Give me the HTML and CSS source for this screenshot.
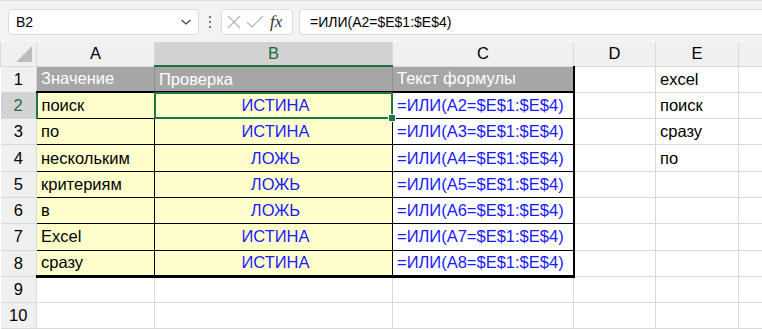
FILE: index.html
```html
<!DOCTYPE html>
<html lang="ru">
<head>
  <meta charset="UTF-8">
  <title>ИЛИ</title>
  <link rel="stylesheet" href="styles.css">
</head>
<body>
  <div class="formula-bar">
    <div class="name-box">
      <span>B2</span>
      <svg class="chevron" width="12" height="8" viewBox="0 0 12 8"><path d="M1.5 2 L6 6 L10.5 2" fill="none" stroke="#444" stroke-width="1.3"/></svg>
    </div>
    <div class="dots"><i></i><i></i><i></i></div>
    <div class="fx-box">
      <svg width="16" height="16" viewBox="0 0 16 16"><path d="M2 2 L14 14 M14 2 L2 14" stroke="#b5b5b5" stroke-width="1.2"/></svg>
      <svg width="18" height="16" viewBox="0 0 18 16"><path d="M1 8 L6 13 L17 2" fill="none" stroke="#b5b5b5" stroke-width="1.2"/></svg>
      <span class="fx">fx</span>
    </div>
    <div class="formula-input">=ИЛИ(A2=$E$1:$E$4)</div>
  </div>

  <table class="sheet">
    <colgroup>
      <col class="c-row"><col class="c-a"><col class="c-b"><col class="c-c"><col class="c-d"><col class="c-e"><col class="c-f">
    </colgroup>
    <thead>
      <tr>
        <th class="corner"><span class="tri"></span></th>
        <th>A</th><th class="sel-col">B</th><th>C</th><th>D</th><th>E</th><th></th>
      </tr>
    </thead>
    <tbody>
      <tr class="r1">
        <th>1</th>
        <td class="head">Значение</td><td class="head">Проверка</td><td class="head last">Текст формулы</td><td></td><td>excel</td><td></td>
      </tr>
      <tr>
        <th class="sel-row">2</th>
        <td class="val">поиск</td><td class="res active">ИСТИНА</td><td class="txt last">=ИЛИ(A2=$E$1:$E$4)</td><td></td><td>поиск</td><td></td>
      </tr>
      <tr>
        <th>3</th>
        <td class="val">по</td><td class="res">ИСТИНА</td><td class="txt last">=ИЛИ(A3=$E$1:$E$4)</td><td></td><td>сразу</td><td></td>
      </tr>
      <tr>
        <th>4</th>
        <td class="val">нескольким</td><td class="res">ЛОЖЬ</td><td class="txt last">=ИЛИ(A4=$E$1:$E$4)</td><td></td><td>по</td><td></td>
      </tr>
      <tr>
        <th>5</th>
        <td class="val">критериям</td><td class="res">ЛОЖЬ</td><td class="txt last">=ИЛИ(A5=$E$1:$E$4)</td><td></td><td></td><td></td>
      </tr>
      <tr>
        <th>6</th>
        <td class="val">в</td><td class="res">ЛОЖЬ</td><td class="txt last">=ИЛИ(A6=$E$1:$E$4)</td><td></td><td></td><td></td>
      </tr>
      <tr>
        <th>7</th>
        <td class="val">Excel</td><td class="res">ИСТИНА</td><td class="txt last">=ИЛИ(A7=$E$1:$E$4)</td><td></td><td></td><td></td>
      </tr>
      <tr class="r8">
        <th>8</th>
        <td class="val">сразу</td><td class="res">ИСТИНА</td><td class="txt last">=ИЛИ(A8=$E$1:$E$4)</td><td></td><td></td><td></td>
      </tr>
      <tr>
        <th>9</th>
        <td></td><td></td><td></td><td></td><td></td><td></td>
      </tr>
      <tr>
        <th>10</th>
        <td></td><td></td><td></td><td></td><td></td><td></td>
      </tr>
    </tbody>
  </table>
</body>
</html>
```

FILE: styles.css
```css
* {
  box-sizing: border-box;
}
body {
  margin: 0;
  background: #fff;
  font-family: "Liberation Sans", Arial, sans-serif;
  color: #000;
  overflow: hidden;
}
.formula-bar {
  display: flex;
  align-items: center;
  height: 42px;
  padding: 0 0 0 8px;
  background: #f3f3f3;
  border-top: 1px solid #e1e1e1;
}
.name-box, .fx-box, .formula-input {
  height: 26px;
  background: #fff;
  border: 1px solid #dcdcdc;
  border-radius: 4px;
  display: flex;
  align-items: center;
}
.name-box {
  width: 191px;
  padding: 0 6px 0 7px;
  justify-content: space-between;
  font-size: 14px;
}
.dots {
  width: 22px;
  display: flex;
  flex-direction: column;
  align-items: center;
  gap: 3px;
}
.dots i {
  width: 2px;
  height: 2px;
  background: #777;
}
.fx-box {
  width: 72px;
  padding: 0 5px 0 4px;
  gap: 4px;
}
.fx {
  font-family: "Liberation Serif", serif;
  font-style: italic;
  font-size: 17px;
  color: #333;
  margin-left: 2px;
}
.formula-input {
  flex: 1;
  margin-left: 6px;
  padding-left: 10px;
  border-right: none;
  border-radius: 4px 0 0 4px;
  font-size: 14px;
}
.sheet {
  border-collapse: collapse;
  table-layout: fixed;
  width: 762px;
  font-size: 16.5px;
}
.c-row { width: 36px; }
.c-a { width: 118px; }
.c-b { width: 238px; }
.c-c { width: 181px; }
.c-d { width: 82px; }
.c-e { width: 83px; }
.c-f { width: 24px; }
.sheet th, .sheet td {
  height: 26.3px;
  padding: 0 0 0 4px;
  border: 1px solid #d9d9d9;
  white-space: nowrap;
  overflow: visible;
  font-weight: normal;
  text-align: left;
}
.sheet thead th {
  height: 24px;
  background: #f0f0f0;
  text-align: center;
  padding: 0;
  border-color: #d9d9d9;
  border-top: none;
}
.sheet thead th.sel-col {
  background: #d2d2d2;
  color: #1e6b3c;
  border-bottom: 2px solid #217346;
}
.corner {
  position: relative;
}
.tri {
  position: absolute;
  right: 4px;
  bottom: 4px;
  width: 0;
  height: 0;
  border-left: 16px solid transparent;
  border-bottom: 16px solid #bdbdbd;
}
.sheet tbody th {
  background: #f0f0f0;
  text-align: center;
  padding: 0;
  border-left: none;
}
.sheet tbody th.sel-row {
  background: #d2d2d2;
  color: #1e6b3c;
  border-right: 2px solid #217346;
}
.sheet td.head {
  background: #a6a6a6;
  color: #fff;
  border: 1px solid #8f8f8f;
  border-bottom: 2px solid #000;
}
.sheet td.val, .sheet td.res {
  background: #ffffcc;
  border: 1px solid #000;
}
.sheet td.res {
  text-align: center;
  color: #1a1aff;
}
.sheet td.txt {
  color: #1a1aff;
  border: 1px solid #000;
}
.sheet td.last {
  border-right: 2px solid #000;
}
.r8 td.val, .r8 td.res, .r8 td.txt {
  border-bottom: 3px solid #000;
}
.sheet td.active {
  position: relative;
}
.sheet td.active::after {
  content: "";
  position: absolute;
  left: -1px;
  top: -1px;
  right: -1px;
  bottom: -1px;
  border: 2px solid #217346;
}
.sheet td.active::before {
  content: "";
  position: absolute;
  right: -4px;
  bottom: -4px;
  width: 6px;
  height: 6px;
  background: #217346;
  border: 1px solid #fff;
  z-index: 1;
}
```
